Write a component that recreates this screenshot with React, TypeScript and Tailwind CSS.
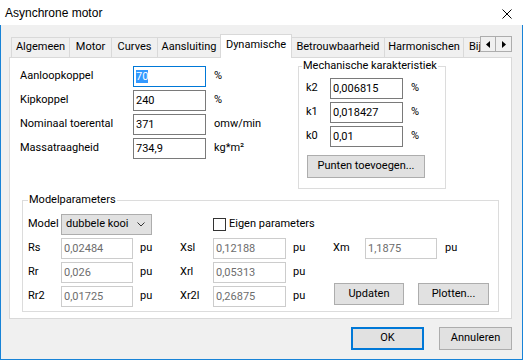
import React from "react";

const tabs = [
  { label: "Algemeen", w: "w-[58px]" },
  { label: "Motor", w: "w-[42px]" },
  { label: "Curves", w: "w-[46px]" },
  { label: "Aansluiting", w: "w-[63px]" },
  { label: "Dynamische", w: "w-[72px]", active: true },
  { label: "Betrouwbaarheid", w: "w-[92px]", afterActive: true },
  { label: "Harmonischen", w: "w-[79px]" },
];

const mainRows = [
  { label: "Aanloopkoppel", value: "70", unit: "%", focused: true },
  { label: "Kipkoppel", value: "240", unit: "%" },
  { label: "Nominaal toerental", value: "371", unit: "omw/min" },
  { label: "Massatraagheid", value: "734,9", unit: "kg*m²" },
];

const kRows = [
  ["k2", "0,006815"],
  ["k1", "0,018427"],
  ["k0", "0,01"],
];

// rows below Rs: [label, value, label, value]
const modelRows = [
  ["Rr", "0,026", "Xrl", "0,05313"],
  ["Rr2", "0,01725", "Xr2l", "0,26875"],
];

function TextBox({
  value,
  disabled,
  className,
}: {
  value: string;
  disabled?: boolean;
  className: string;
}) {
  return (
    <input
      readOnly
      disabled={disabled}
      value={value}
      className={
        "h-[21px] min-w-0 shrink-0 bg-white pl-[2px] outline-none border " +
        (disabled ? "border-[#cccccc] text-[#6d6d6d] " : "border-[#7a7a7a] text-black ") +
        className
      }
    />
  );
}

function Button({ label, className }: { label: string; className: string }) {
  return (
    <button className={"flex items-center justify-center bg-[#e1e1e1] border border-[#adadad] " + className}>
      {label}
    </button>
  );
}

export default function App() {
  return (
    <div className="w-[523px] h-[360px] flex flex-col bg-[#f0f0f0] text-[11px] text-black font-['Roboto',sans-serif] select-none">
      {/* title bar */}
      <div className="h-[25px] shrink-0 bg-white flex items-center justify-between pl-[5px] pr-[11px]">
        <span className="text-[12px] font-['Liberation_Sans',sans-serif] text-black">Asynchrone motor</span>
        <svg width="10" height="10" viewBox="0 0 10 10" className="mt-[2px]">
          <path d="M0.5 0.5 L9.5 9.5 M9.5 0.5 L0.5 9.5" stroke="#000" strokeWidth="1" />
        </svg>
      </div>

      <div className="flex-1 flex flex-col border-l border-r border-b border-[#1883d7] pt-[9px] pl-[8px] pr-[9px] pb-[9px]">
        {/* tabs */}
        <div className="h-[23px] flex items-end ml-[2px]">
          {tabs.map((t) =>
            t.active ? (
              <div
                key={t.label}
                className={t.w + " h-[24px] -mb-px relative z-10 bg-white border-l border-r border-t border-[#d9d9d9] flex items-center justify-center pb-[3px]"}
              >
                {t.label}
              </div>
            ) : (
              <div
                key={t.label}
                className={
                  t.w +
                  " h-[20px] border-t border-[#d9d9d9] flex items-center justify-center " +
                  (t.afterActive ? "" : "border-l")
                }
              >
                {t.label}
              </div>
            )
          )}
          <div className="w-[17px] h-[20px] border-t border-l border-[#d9d9d9] overflow-hidden flex items-center pl-[5px]">
            Bij
          </div>
          <div className="self-start mt-[2px] flex">
            <div className="w-[16px] h-[16px] border border-[#adadad] bg-[#f0f0f0] flex items-center justify-center">
              <svg width="4" height="7" viewBox="0 0 4 7">
                <path d="M4 0 L0 3.5 L4 7 Z" fill="#000" />
              </svg>
            </div>
            <div className="w-[16px] h-[16px] border border-l-0 border-[#adadad] bg-[#f0f0f0] flex items-center justify-center">
              <svg width="4" height="7" viewBox="0 0 4 7">
                <path d="M0 0 L4 3.5 L0 7 Z" fill="#000" />
              </svg>
            </div>
          </div>
        </div>

        {/* panel */}
        <div className="w-[503px] bg-white border border-[#d9d9d9] pt-[1px] pb-[6px] pl-[10px]">
          <div className="flex items-start">
            <div className="w-[278px] mt-[7px] flex flex-col gap-[3px]">
              {mainRows.map((r) => (
                <div key={r.label} className="h-[21px] flex items-center">
                  <span className="w-[113px]">{r.label}</span>
                  {r.focused ? (
                    <div className="w-[73px] h-[21px] border border-[#0078d7] bg-white flex items-center pl-[2px]">
                      <span className="bg-[#3399ff] text-white leading-[13px]">{r.value}</span>
                    </div>
                  ) : (
                    <TextBox value={r.value} className="w-[73px]" />
                  )}
                  <span className="ml-[8px]">{r.unit}</span>
                </div>
              ))}
            </div>

            <fieldset className="w-[148px] border border-[#dcdcdc] pl-[7px] pb-[10px]">
              <legend className="ml-[-4px] px-[1px] leading-[14px]">Mechanische karakteristiek</legend>
              <div className="mt-[5px] flex flex-col gap-[3px]">
                {kRows.map(([k, v]) => (
                  <div key={k} className="h-[21px] flex items-center">
                    <span className="w-[24px]">{k}</span>
                    <TextBox value={v} className="w-[73px]" />
                    <span className="ml-[8px]">%</span>
                  </div>
                ))}
              </div>
              <Button label="Punten toevoegen..." className="mt-[8px] ml-px w-[118px] h-[23px]" />
            </fieldset>
          </div>

          <fieldset className="mt-[4px] ml-[2px] w-[477px] border border-[#dcdcdc] pl-[5px] pb-[4px]">
            <legend className="px-[1px] leading-[14px]">Modelparameters</legend>
            <div className="mt-[7px] flex flex-col gap-[3px]">
              <div className="h-[21px] flex items-center">
                <span className="w-[33px]">Model</span>
                <div className="w-[91px] h-[21px] bg-[#e1e1e1] border border-[#adadad] flex items-center justify-between pl-[4px] pr-[6px]">
                  <span>dubbele kooi</span>
                  <svg width="8" height="5" viewBox="0 0 8 5">
                    <path d="M0.5 0.5 L4 4 L7.5 0.5" stroke="#333" strokeWidth="1" fill="none" />
                  </svg>
                </div>
                <div className="ml-[61px] flex items-center gap-[3px]">
                  <div className="w-[13px] h-[13px] border border-[#333333] bg-white" />
                  <span>Eigen parameters</span>
                </div>
              </div>

              <div className="h-[21px] flex items-center">
                <span className="w-[33px]">Rs</span>
                <TextBox disabled value="0,02484" className="w-[72px]" />
                <span className="w-[47px] pl-[7px]">pu</span>
                <span className="w-[33px]">Xsl</span>
                <TextBox disabled value="0,12188" className="w-[73px]" />
                <span className="w-[47px] pl-[7px]">pu</span>
                <span className="w-[32px]">Xm</span>
                <TextBox disabled value="1,1875" className="w-[72px]" />
                <span className="pl-[8px]">pu</span>
              </div>

              <div className="flex">
                <div className="flex flex-col gap-[3px]">
                  {modelRows.map(([l1, v1, l2, v2]) => (
                    <div key={l1} className="h-[21px] flex items-center">
                      <span className="w-[33px]">{l1}</span>
                      <TextBox disabled value={v1} className="w-[72px]" />
                      <span className="w-[47px] pl-[7px]">pu</span>
                      <span className="w-[33px]">{l2}</span>
                      <TextBox disabled value={v2} className="w-[73px]" />
                      <span className="w-[47px] pl-[7px]">pu</span>
                    </div>
                  ))}
                </div>
                <div className="self-end mb-[2px] flex">
                  <Button label="Updaten" className="ml-px w-[70px] h-[22px]" />
                  <Button label="Plotten..." className="ml-[14px] w-[71px] h-[22px]" />
                </div>
              </div>
            </div>
          </fieldset>
        </div>

        {/* dialog buttons */}
        <div className="mt-[8px] flex justify-end gap-[15px] pr-px">
          <button className="w-[73px] h-[23px] bg-[#e1e1e1] border-2 border-[#0078d7]">OK</button>
          <Button label="Annuleren" className="w-[73px] h-[23px]" />
        </div>
      </div>
    </div>
  );
}
